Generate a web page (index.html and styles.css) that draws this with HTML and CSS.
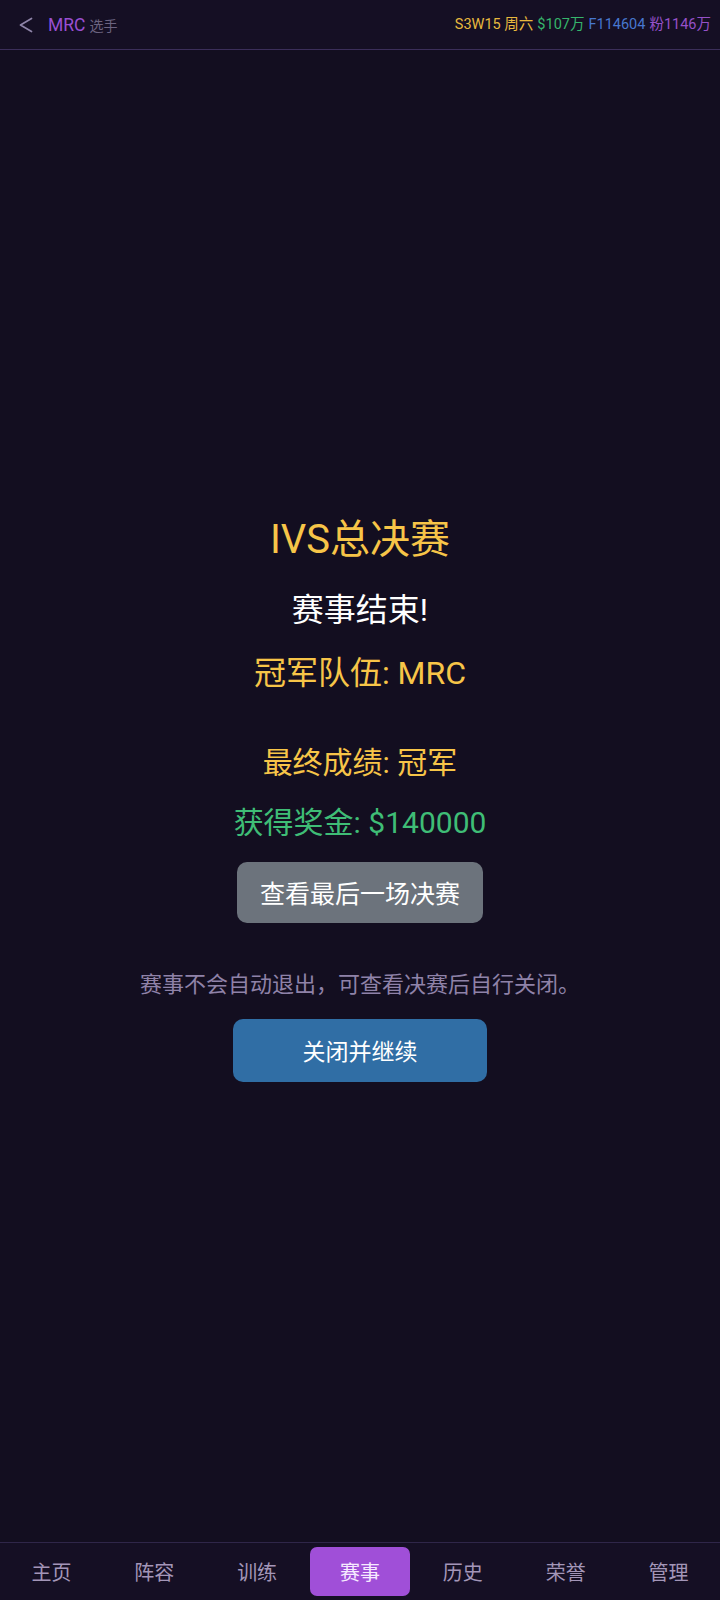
FILE: index.html
```html
<!DOCTYPE html>
<html lang="zh-CN">
<head>
    <meta charset="UTF-8">
    <meta name="viewport" content="width=device-width, initial-scale=1.0">
    <title>IVS总决赛</title>
    <link rel="stylesheet" href="styles.css">
</head>
<body>
    <div class="app">
        <header class="topbar">
            <div class="topbar-left">
                <svg class="back" width="14" height="16" viewBox="0 0 14 16">
                    <polyline points="12.5,1.5 1.5,8 12.5,14.5" fill="none" stroke="#8e84a8" stroke-width="1.7" stroke-linecap="round" stroke-linejoin="round"/>
                </svg>
                <span class="team">MRC</span>
                <span class="role">选手</span>
            </div>
            <div class="stats">
                <span class="s-yellow">S3W15 周六</span>
                <span class="s-green">$107万</span>
                <span class="s-blue">F114604</span>
                <span class="s-purple">粉1146万</span>
            </div>
        </header>

        <main class="main">
            <div class="result">
                <h2 class="title">IVS总决赛</h2>
                <p class="ended">赛事结束!</p>
                <p class="champion">冠军队伍: MRC</p>

                <p class="rank">最终成绩: 冠军</p>
                <p class="prize">获得奖金: $140000</p>
                <button class="btn btn-gray">查看最后一场决赛</button>

                <p class="hint">赛事不会自动退出，可查看决赛后自行关闭。</p>
                <button class="btn btn-blue">关闭并继续</button>
            </div>
        </main>

        <nav class="tabbar">
            <a class="tab">主页</a>
            <a class="tab">阵容</a>
            <a class="tab">训练</a>
            <a class="tab active">赛事</a>
            <a class="tab">历史</a>
            <a class="tab">荣誉</a>
            <a class="tab">管理</a>
        </nav>
    </div>
</body>
</html>
```

FILE: styles.css
```css
body {
    margin: 0;
    padding: 0;
    background-color: #130e20;
    font-family: 'Roboto', 'Noto Sans CJK SC', sans-serif;
    color: #fff;
}

.app {
    display: flex;
    flex-direction: column;
    height: 1600px;
}

/* top bar */
.topbar {
    height: 49px;
    border-bottom: 1px solid #3b2e5a;
    background-color: #150f24;
    display: flex;
    align-items: center;
    justify-content: space-between;
    padding: 0 9px 0 19px;
}

.topbar-left {
    display: flex;
    align-items: center;
}

.back {
    margin-right: 15px;
    margin-top: 1px;
}

.team {
    font-size: 17.5px;
    color: #9a4fd2;
}

.role {
    font-size: 14px;
    color: #6b6380;
    margin-left: 4px;
    margin-top: 1px;
}

.stats {
    font-size: 14.5px;
    line-height: 20px;
    display: flex;
    align-items: baseline;
    gap: 4px;
}

.s-yellow { color: #e8b93e; }
.s-green { color: #36b46b; }
.s-blue { color: #4777cf; }
.s-purple { color: #9551c8; }

/* main content */
.main {
    flex: 1;
    display: flex;
    align-items: center;
    justify-content: center;
    padding-top: 5px;
}

.result {
    display: flex;
    flex-direction: column;
    align-items: center;
}

.result p,
.result h2 {
    margin: 0;
    font-weight: normal;
}

.title {
    font-size: 40px;
    line-height: 48px;
    color: #f7c548;
}

.ended {
    font-size: 32px;
    line-height: 40px;
    margin-top: 26px !important;
    color: #ffffff;
}

.champion {
    font-size: 32px;
    line-height: 40px;
    margin-top: 23px !important;
    color: #f7c548;
}

.rank {
    font-size: 30px;
    line-height: 38px;
    margin-top: 51px !important;
    color: #f7c548;
}

.prize {
    font-size: 30px;
    line-height: 38px;
    margin-top: 22px !important;
    color: #3fbd76;
}

.btn {
    border: none;
    color: #fff;
    font-family: inherit;
    border-radius: 10px;
    cursor: pointer;
}

.btn-gray {
    margin-top: 20px;
    width: 246px;
    height: 61px;
    font-size: 25px;
    background-color: #6c737c;
}

.hint {
    font-size: 22px;
    line-height: 30px;
    margin-top: 47px !important;
    color: #8f82a8;
}

.btn-blue {
    margin-top: 19px;
    width: 254px;
    height: 63px;
    font-size: 23px;
    background-color: #306ea5;
}

/* bottom tabs */
.tabbar {
    height: 58px;
    border-top: 1px solid #2f2649;
    background-color: #150f24;
    display: grid;
    grid-template-columns: repeat(7, 1fr);
    padding: 4px 0;
    box-sizing: border-box;
}

.tab {
    display: flex;
    align-items: center;
    justify-content: center;
    margin: 0 1.5px;
    font-size: 20px;
    color: #a396b8;
    border-radius: 7px;
}

.tab.active {
    background-color: #a04fd8;
    color: #f6eaff;
}
```
